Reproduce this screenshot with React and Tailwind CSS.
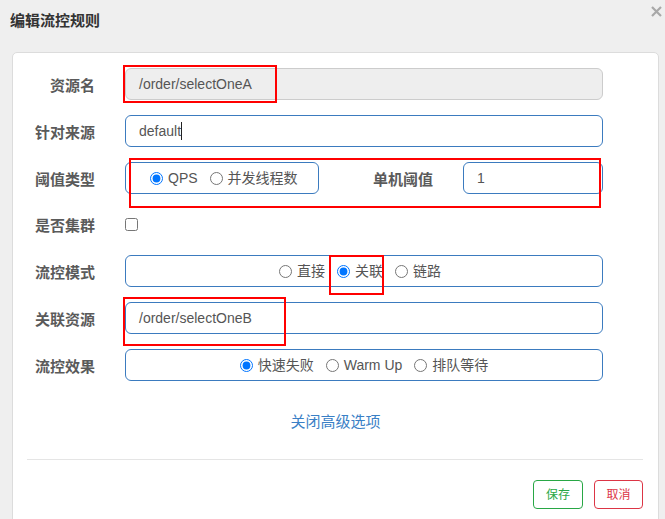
import React from "react";

const inputBlue = "border border-[#3b7bbf] rounded-[6px] bg-white";

function Radio({ checked, label, first }) {
  return (
    <label className={`flex items-center ${first ? "" : "ml-[12px]"}`}>
      <input type="radio" defaultChecked={checked} className="w-[13px] h-[13px] m-0 mr-[5px]" />
      <span className="text-[14px] leading-[20px] text-[#555]">{label}</span>
    </label>
  );
}

function Row({ label, children, h = "h-[32px]" }) {
  return (
    <div className={`flex items-center ${h} mb-[15px]`}>
      <div className="w-[82px] text-right text-[15px] font-bold text-[#5a5a5a] leading-[20px] pt-[3px]">{label}</div>
      <div className="ml-[30px] w-[478px] h-full flex items-center">{children}</div>
    </div>
  );
}

export default function App() {
  return (
    <div
      className="relative w-[665px] h-[519px] overflow-hidden bg-[#efefef]"
      style={{ fontFamily: '"Liberation Sans", "Noto Sans CJK SC", sans-serif' }}
    >
      <div className="flex justify-between items-start h-[52px]">
        <div className="pl-[10px] pt-[11px] text-[15px] font-bold text-[#333] leading-[20px]">编辑流控规则</div>
        <div className="pt-[6px] pr-[3px]">
          <svg width="11" height="11" viewBox="0 0 11 11">
            <path d="M1 1 L10 10 M10 1 L1 10" stroke="#a8a8a8" strokeWidth="2.2" />
          </svg>
        </div>
      </div>

      <div className="ml-[12px] w-[647px] bg-white border border-[#dcdcdc] rounded-[5px] pt-[15px] pb-[30px]">
        <Row label="资源名">
          <div className="w-full h-full flex items-center border border-[#ccc] rounded-[6px] bg-[#eeeeee] pl-[13px] text-[14px] text-[#555]">
            /order/selectOneA
          </div>
        </Row>
        <Row label="针对来源">
          <div className={`w-full h-full flex items-center ${inputBlue} pl-[13px] text-[14px] text-[#555]`}>
            default<span className="inline-block w-px h-[18px] bg-[#222]"></span>
          </div>
        </Row>
        <Row label="阈值类型">
          <div className={`w-[194px] h-full flex items-center ${inputBlue} pl-[24px]`}>
            <Radio checked label="QPS" first />
            <Radio label="并发线程数" />
          </div>
          <div className="flex-1 text-right text-[15px] font-bold text-[#5a5a5a] leading-[20px] pt-[3px]">单机阈值</div>
          <div className={`ml-[30px] w-[140px] h-full flex items-center ${inputBlue} pl-[13px] text-[14px] text-[#555]`}>
            1
          </div>
        </Row>
        <Row label="是否集群" h="h-[31px]">
          <input type="checkbox" className="w-[13px] h-[13px] m-0" />
        </Row>
        <Row label="流控模式">
          <div className={`w-full h-full flex items-center justify-center ${inputBlue} pr-[8px]`}>
            <Radio label="直接" first />
            <Radio checked label="关联" />
            <Radio label="链路" />
          </div>
        </Row>
        <Row label="关联资源">
          <div className={`w-full h-full flex items-center ${inputBlue} pl-[13px] text-[14px] text-[#555]`}>
            /order/selectOneB
          </div>
        </Row>
        <Row label="流控效果">
          <div className={`w-full h-full flex items-center justify-center ${inputBlue}`}>
            <Radio checked label="快速失败" first />
            <Radio label="Warm Up" />
            <Radio label="排队等待" />
          </div>
        </Row>

        <div className="mt-[31px] h-[20px] leading-[20px] text-center text-[15px] text-[#3a80c6]">关闭高级选项</div>

        <div className="mt-[27px] ml-[14px] mr-[15px] border-t border-[#e5e5e5]"></div>

        <div className="mt-[20px] mr-[15px] flex justify-end gap-[11px]">
          <button className="w-[50px] h-[29px] border border-[#28a745] rounded-[4px] text-[12px] text-[#28a745] bg-white">保存</button>
          <button className="w-[49px] h-[29px] border border-[#dc3545] rounded-[4px] text-[12px] text-[#dc3545] bg-white">取消</button>
        </div>
      </div>

      <div className="absolute left-[123px] top-[65px] w-[154px] h-[38px] border-2 border-[#ff0000]"></div>
      <div className="absolute left-[129px] top-[158px] w-[472px] h-[50px] border-2 border-[#ff0000]"></div>
      <div className="absolute left-[329px] top-[255px] w-[55px] h-[40px] border-2 border-[#ff0000]"></div>
      <div className="absolute left-[123px] top-[297px] w-[163px] h-[49px] border-2 border-[#ff0000]"></div>
    </div>
  );
}
